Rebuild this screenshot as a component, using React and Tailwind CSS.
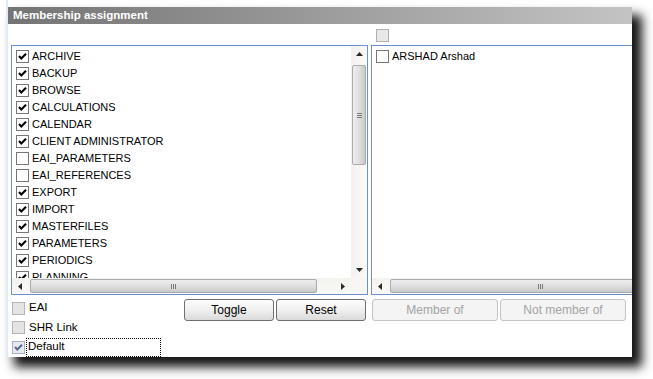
import React from "react";

const items = [
  ["ARCHIVE", true],
  ["BACKUP", true],
  ["BROWSE", true],
  ["CALCULATIONS", true],
  ["CALENDAR", true],
  ["CLIENT ADMINISTRATOR", true],
  ["EAI_PARAMETERS", false],
  ["EAI_REFERENCES", false],
  ["EXPORT", true],
  ["IMPORT", true],
  ["MASTERFILES", true],
  ["PARAMETERS", true],
  ["PERIODICS", true],
  ["PLANNING", true],
];

function Check({ color = "#000" }) {
  return (
    <svg width="11" height="11" viewBox="0 0 11 11" className="block">
      <path d="M2 5 L4.3 7.4 L9 2.8" fill="none" stroke={color} strokeWidth="2.1" />
    </svg>
  );
}

function Box({ checked, variant = "normal" }) {
  if (variant === "disabled") {
    return (
      <div className="w-[13px] h-[13px] shrink-0 border border-[#b4b4b4] bg-[#e4e4e4]" />
    );
  }
  if (variant === "default") {
    return (
      <div className="w-[13px] h-[13px] shrink-0 border border-[#a8b0c0] bg-[#e6e9ef]">
        <Check color="#5a6890" />
      </div>
    );
  }
  return (
    <div className="w-[13px] h-[13px] shrink-0 border border-[#777777] bg-white">
      {checked && <Check />}
    </div>
  );
}

function Tri({ dir }) {
  const pts = {
    up: "0,4 3.5,0 7,4",
    down: "0,0 3.5,4 7,0",
    left: "4,0 0,3.5 4,7",
    right: "0,0 4,3.5 0,7",
  }[dir];
  const vertical = dir === "up" || dir === "down";
  return (
    <svg
      width={vertical ? 7 : 4}
      height={vertical ? 4 : 7}
      viewBox={vertical ? "0 0 7 4" : "0 0 4 7"}
      className="block"
    >
      <polygon points={pts} fill="#2a2a2a" />
    </svg>
  );
}

function VScroll() {
  return (
    <div className="w-[16px] h-full flex flex-col bg-gradient-to-r from-[#f2f2ef] to-[#fafaf8]">
      <div className="h-[16px] flex items-center justify-center">
        <Tri dir="up" />
      </div>
      <div className="flex-1 pt-[3px]">
        <div className="h-[100px] mx-[1px] rounded-[2px] border border-[#a9abb1] bg-gradient-to-r from-[#eeeeee] via-[#e0e0e0] to-[#c9c9c9] flex flex-col items-center justify-center gap-[1px]">
          <div className="w-[5px] h-[1px] bg-[#7a7a7a]" />
          <div className="w-[5px] h-[1px] bg-[#7a7a7a]" />
          <div className="w-[5px] h-[1px] bg-[#7a7a7a]" />
        </div>
      </div>
      <div className="h-[16px] flex items-center justify-center">
        <Tri dir="down" />
      </div>
    </div>
  );
}

function HScroll({ thumbWidth, showRight = true }) {
  return (
    <div className="flex-1 h-full flex items-stretch bg-gradient-to-b from-[#f2f2ef] to-[#fafaf8]">
      <div className="w-[16px] flex items-center justify-center shrink-0">
        <Tri dir="left" />
      </div>
      <div className="flex-1 pl-[2px] flex items-center">
        <div
          className="h-[14px] rounded-[2px] border border-[#a9abb1] bg-gradient-to-b from-[#eeeeee] via-[#e0e0e0] to-[#c9c9c9] flex items-center justify-center gap-[1px] shrink-0"
          style={{ width: thumbWidth }}
        >
          <div className="w-[1px] h-[5px] bg-[#7a7a7a]" />
          <div className="w-[1px] h-[5px] bg-[#7a7a7a]" />
          <div className="w-[1px] h-[5px] bg-[#7a7a7a]" />
        </div>
      </div>
      {showRight && (
        <div className="w-[16px] flex items-center justify-center shrink-0">
          <Tri dir="right" />
        </div>
      )}
    </div>
  );
}

function Button({ children, width, disabled }) {
  return (
    <div
      className={
        "h-[22px] rounded-[3px] border flex items-center justify-center text-[12px] " +
        (disabled
          ? "border-[#c3c3c3] bg-[#f4f4f4] text-[#a3a3a3]"
          : "border-[#6f6f6f] bg-gradient-to-b from-[#fdfdfd] via-[#f0f0f0] to-[#dadada] text-black")
      }
      style={{ width }}
    >
      {children}
    </div>
  );
}

export default function App() {
  return (
    <div className="w-[653px] h-[379px] bg-white overflow-hidden font-['Liberation_Sans',Arial,sans-serif]">
      <div className="ml-[6px] h-[7px] border-l-2 border-[#e2eaf4]" />
      <div className="ml-[6px] w-[626px] h-[350px] border-l-2 border-[#e2eaf4] bg-white shadow-[9px_9px_10px_1px_rgba(0,0,0,0.92)] overflow-hidden flex flex-col">
        {/* title */}
        <div className="h-[17px] shrink-0 bg-gradient-to-r from-[#747474] to-[#c4c4c4] flex items-center pl-[5px]">
          <span className="text-white font-bold text-[11.5px] leading-none">Membership assignment</span>
        </div>
        {/* top checkbox row */}
        <div className="h-[21px] shrink-0 flex items-center pl-[368px]">
          <div className="w-[13px] h-[13px] border border-[#b0b0b0] bg-[#e8e8e8] mt-[1px]" />
        </div>
        {/* lists */}
        <div className="h-[250px] shrink-0 flex pl-[3px] gap-[3px]">
          <div className="w-[357px] h-full border border-[#6d8fd0] flex flex-col shrink-0">
            <div className="flex-1 flex min-h-0">
              <div className="flex-1 overflow-hidden pt-[2px] pl-[4px]">
                {items.map(([label, checked]) => (
                  <div key={label} className="h-[17px] flex items-center gap-[3px] text-[11px] text-black whitespace-nowrap">
                    <Box checked={checked} />
                    <span>{label}</span>
                  </div>
                ))}
              </div>
              <VScroll />
            </div>
            <div className="h-[16px] flex shrink-0">
              <HScroll thumbWidth={287} />
              <div className="w-[16px] bg-[#f6f6f3]" />
            </div>
          </div>
          <div className="w-[270px] h-full border border-[#6d8fd0] flex flex-col shrink-0">
            <div className="flex-1 pt-[2px] pl-[4px]">
              <div className="h-[17px] flex items-center gap-[3px] text-[11px] text-black whitespace-nowrap">
                <Box checked={false} />
                <span>ARSHAD Arshad</span>
              </div>
            </div>
            <div className="h-[16px] flex shrink-0">
              <HScroll thumbWidth={300} showRight={false} />
            </div>
          </div>
        </div>
        {/* bottom */}
        <div className="flex pl-[3px] text-[11.5px]">
          <div className="w-[357px] flex shrink-0">
            <div className="w-[173px] flex flex-col pt-[3px] pl-[1px]">
              <div className="h-[20px] flex items-center gap-[4px]">
                <Box variant="disabled" />
                <span>EAI</span>
              </div>
              <div className="h-[19px] flex items-center gap-[4px]">
                <Box variant="disabled" />
                <span>SHR Link</span>
              </div>
              <div className="h-[20px] flex items-center gap-[1px]">
                <Box variant="default" />
                <div className="w-[135px] h-[19px] border border-dotted border-black flex items-center pl-[1px]">
                  Default
                </div>
              </div>
            </div>
            <div className="flex gap-[2px] pt-[4px]">
              <Button width={90}>Toggle</Button>
              <Button width={90}>Reset</Button>
            </div>
          </div>
          <div className="ml-[4px] flex gap-[2px] pt-[4px]">
            <Button width={126} disabled>Member of</Button>
            <Button width={126} disabled>Not member of</Button>
          </div>
        </div>
      </div>
    </div>
  );
}
